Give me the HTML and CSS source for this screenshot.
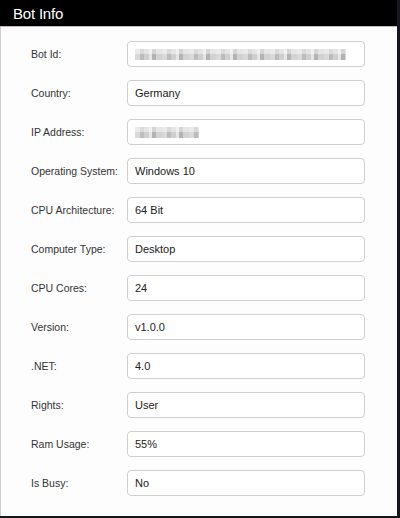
FILE: index.html
```html
<!DOCTYPE html>
<html>
<head>
<meta charset="utf-8">
<link rel="stylesheet" href="styles.css">
</head>
<body>
<div class="panel">
  <div class="header">Bot Info</div>
  <div class="form">
    <label class="lbl">Bot Id:</label>
    <div class="field"><span class="blur blur-long" aria-label="hidden"></span></div>
    <label class="lbl">Country:</label>
    <div class="field">Germany</div>
    <label class="lbl">IP Address:</label>
    <div class="field"><span class="blur blur-short" aria-label="hidden"></span></div>
    <label class="lbl">Operating System:</label>
    <div class="field">Windows 10</div>
    <label class="lbl">CPU Architecture:</label>
    <div class="field">64 Bit</div>
    <label class="lbl">Computer Type:</label>
    <div class="field">Desktop</div>
    <label class="lbl">CPU Cores:</label>
    <div class="field">24</div>
    <label class="lbl">Version:</label>
    <div class="field">v1.0.0</div>
    <label class="lbl">.NET:</label>
    <div class="field">4.0</div>
    <label class="lbl">Rights:</label>
    <div class="field">User</div>
    <label class="lbl">Ram Usage:</label>
    <div class="field">55%</div>
    <label class="lbl">Is Busy:</label>
    <div class="field">No</div>
  </div>
</div>
</body>
</html>
```
FILE: styles.css
```css
html, body {
  margin: 0;
  padding: 0;
  background: #15171c;
  height: 518px;
  overflow: hidden;
}
.panel {
  width: 397px;
  height: 516px;
  background: #fdfdfd;
  border-left: 1px solid #cfcfcf;
  box-sizing: border-box;
  font-family: "Liberation Sans", Arial, sans-serif;
  display: flex;
  flex-direction: column;
}
.header {
  height: 26px;
  background: #000;
  color: #fff;
  font-size: 15px;
  line-height: 28px;
  padding-left: 13px;
  letter-spacing: -0.2px;
  border-bottom: 1px solid #bdbdbd;
  margin-left: -1px;
}
.form {
  display: grid;
  grid-template-columns: 96px 238px;
  grid-auto-rows: 26px;
  row-gap: 13px;
  padding: 14px 0 0 30px;
  align-items: center;
}
.lbl {
  font-size: 10.5px;
  color: #333;
}
.field {
  height: 26px;
  box-sizing: border-box;
  border: 1px solid #cfcfcf;
  border-radius: 4px;
  background: #fff;
  font-size: 11px;
  color: #222;
  padding-left: 7px;
  display: flex;
  align-items: center;
}
.blur {
  display: block;
  height: 11px;
  background:
    linear-gradient(to bottom, rgba(255,255,255,0.45) 0 45%, rgba(255,255,255,0) 45%),
    repeating-linear-gradient(to right, #d9d9d9 0 5px, #bcbcbc 5px 9px, #cfcfcf 9px 14px, #e6e6e6 14px 17px, #b3b3b3 17px 21px, #d2d2d2 21px 27px);
}
.blur-long { width: 211px; }
.blur-short { width: 64px; }
```
